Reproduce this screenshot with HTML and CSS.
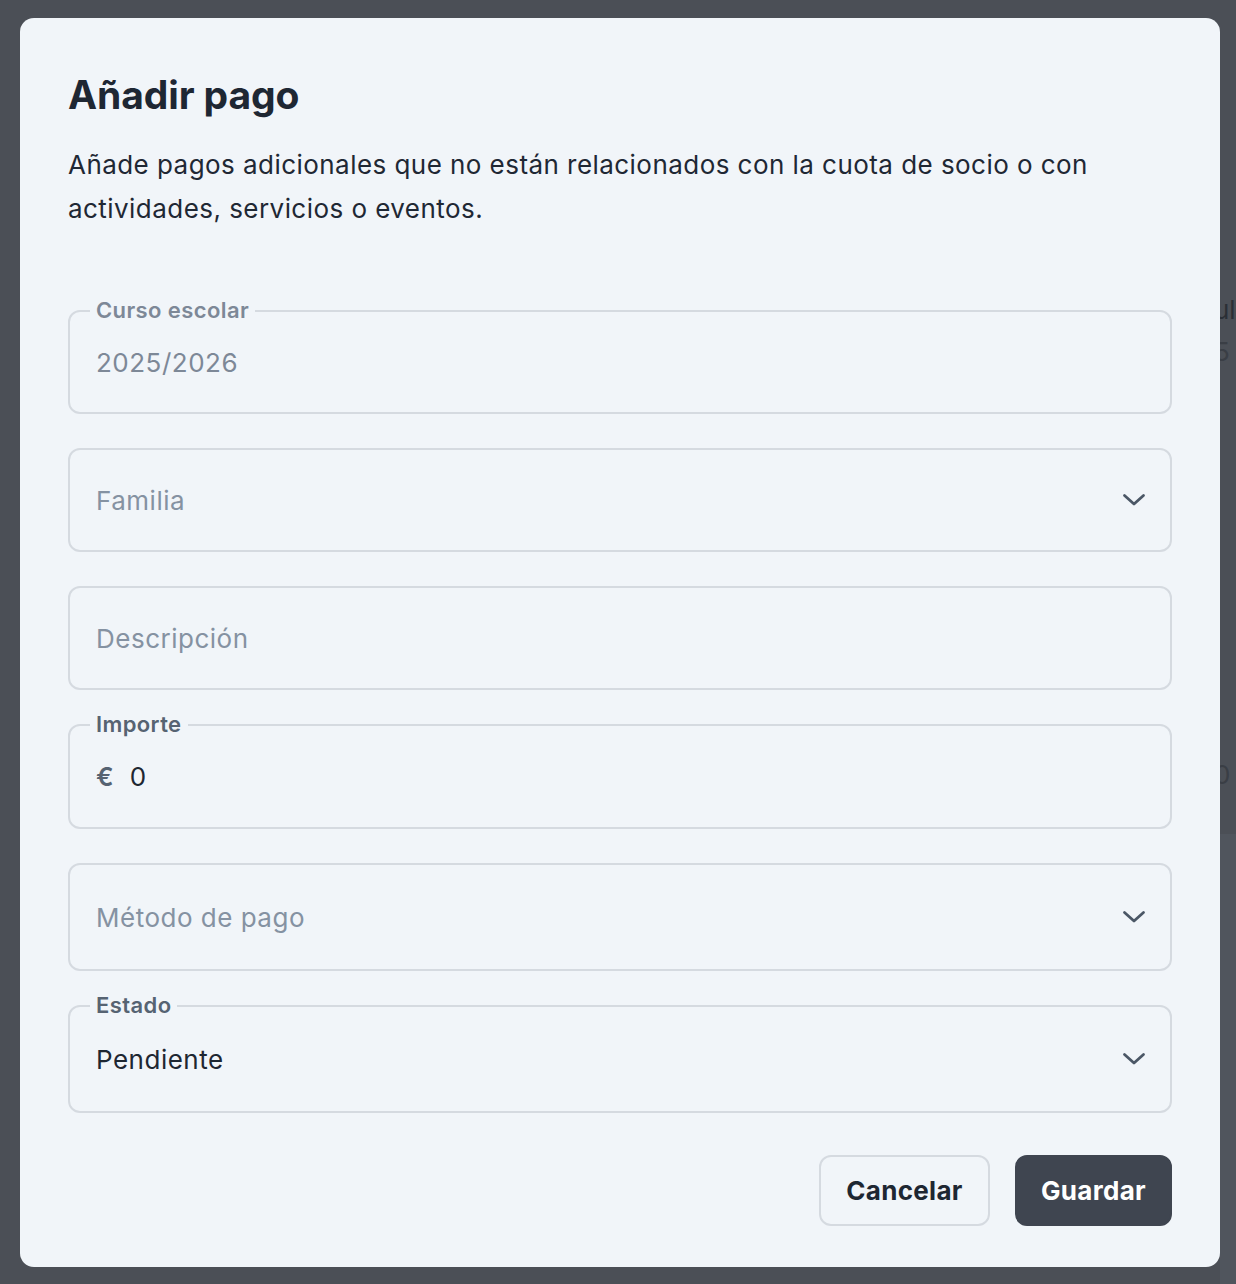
FILE: index.html
```html
<!DOCTYPE html>
<html lang="es">
<head>
    <meta charset="UTF-8">
    <meta name="viewport" content="width=device-width, initial-scale=1.0">
    <title>Añadir pago</title>
    <link rel="stylesheet" href="styles.css">
</head>
<body>
    <div class="behind">
        <span class="behind-text t1">ul</span>
        <span class="behind-text t2">5</span>
        <span class="behind-text t3">0</span>
        <div class="behind-card"></div>
    </div>

    <div class="dialog">
        <h1 class="title">Añadir pago</h1>
        <p class="desc">Añade pagos adicionales que no están relacionados con la cuota de socio o con actividades, servicios o eventos.</p>

        <div class="form">
            <div class="field">
                <span class="field-label muted">Curso escolar</span>
                <span class="value disabled">2025/2026</span>
            </div>
            <div class="field select">
                <span class="value placeholder">Familia</span>
                <svg class="chevron" width="24" height="14" viewBox="0 0 24 14"><path d="M2.5 2.5l9.5 8.5 9.5-8.5" fill="none" stroke="#4b5766" stroke-width="2.8" stroke-linecap="round" stroke-linejoin="round"/></svg>
            </div>
            <div class="field">
                <span class="value placeholder">Descripción</span>
            </div>
            <div class="field amount">
                <span class="field-label">Importe</span>
                <span class="currency">€</span>
                <span class="value">0</span>
            </div>
            <div class="field select tall">
                <span class="value placeholder">Método de pago</span>
                <svg class="chevron" width="24" height="14" viewBox="0 0 24 14"><path d="M2.5 2.5l9.5 8.5 9.5-8.5" fill="none" stroke="#4b5766" stroke-width="2.8" stroke-linecap="round" stroke-linejoin="round"/></svg>
            </div>
            <div class="field select tall">
                <span class="field-label">Estado</span>
                <span class="value">Pendiente</span>
                <svg class="chevron" width="24" height="14" viewBox="0 0 24 14"><path d="M2.5 2.5l9.5 8.5 9.5-8.5" fill="none" stroke="#4b5766" stroke-width="2.8" stroke-linecap="round" stroke-linejoin="round"/></svg>
            </div>
        </div>

        <div class="actions">
            <button class="btn btn-outline">Cancelar</button>
            <button class="btn btn-dark">Guardar</button>
        </div>
    </div>
</body>
</html>
```

FILE: styles.css
```css
body {
    margin: 0;
    font-family: Inter, "Noto Sans", sans-serif;
    background-color: #4b4f56;
    height: 1284px;
    overflow: hidden;
    position: relative;
}
.behind {
    position: absolute;
    inset: 0;
}
.behind-text {
    position: absolute;
    left: 1214px;
    font-size: 26px;
    color: #2b2f36;
}
.t1 { top: 294px; }
.t2 { top: 336px; color: #3a3e45; }
.t3 { top: 759px; color: #3a3e45; }
.behind-card {
    position: absolute;
    left: 1220px;
    right: 0;
    top: 834px;
    height: 450px;
    background-color: #50555d;
}
.dialog {
    position: relative;
    margin: 18px 0 0 20px;
    width: 1200px;
    height: 1249px;
    box-sizing: border-box;
    background-color: #f1f5f9;
    border-radius: 14px;
    padding: 53px 48px 0 48px;
    display: flex;
    flex-direction: column;
}
.title {
    margin: 0;
    font-size: 39px;
    line-height: 48px;
    font-weight: 700;
    color: #1e2733;
    letter-spacing: -0.1px;
}
.desc {
    margin: 24px 0 0 0;
    font-size: 26px;
    line-height: 44px;
    letter-spacing: 0.45px;
    color: #1f2834;
    max-width: 1060px;
}
.form {
    margin-top: 79px;
    display: flex;
    flex-direction: column;
    gap: 34px;
}
.field {
    position: relative;
    height: 104px;
    box-sizing: border-box;
    border: 2px solid #d5dae0;
    border-radius: 12px;
    display: flex;
    align-items: center;
    padding: 0 26px;
}
.field.tall {
    height: 108px;
}
.amount {
    height: 105px;
}
.field-label {
    position: absolute;
    top: -16px;
    left: 20px;
    padding: 0 6px;
    background-color: #f1f5f9;
    font-size: 22px;
    line-height: 28px;
    font-weight: 600;
    letter-spacing: 0.4px;
    color: #566372;
}
.field-label.muted {
    color: #7d8897;
}
.value {
    font-size: 26px;
    letter-spacing: 0.5px;
    color: #1e2732;
}
.value.disabled {
    color: #7d8897;
}
.value.placeholder {
    color: #8592a2;
}
.currency {
    font-size: 26px;
    font-weight: 600;
    color: #566372;
    margin-right: 16px;
}
.chevron {
    margin-left: auto;
    margin-right: -2px;
}
.actions {
    margin-top: 42px;
    display: flex;
    justify-content: flex-end;
    gap: 25px;
}
.btn {
    height: 71px;
    box-sizing: border-box;
    font-family: Inter, "Noto Sans", sans-serif;
    font-size: 26px;
    font-weight: 700;
    letter-spacing: 0.3px;
    border-radius: 12px;
    padding: 0 20px;
    cursor: pointer;
}
.btn-outline {
    background-color: #f1f5f9;
    border: 2px solid #d5dae0;
    color: #1e2732;
    width: 171px;
}
.btn-dark {
    background-color: #3f4550;
    border: 2px solid #3f4550;
    color: #ffffff;
    width: 157px;
}
```
